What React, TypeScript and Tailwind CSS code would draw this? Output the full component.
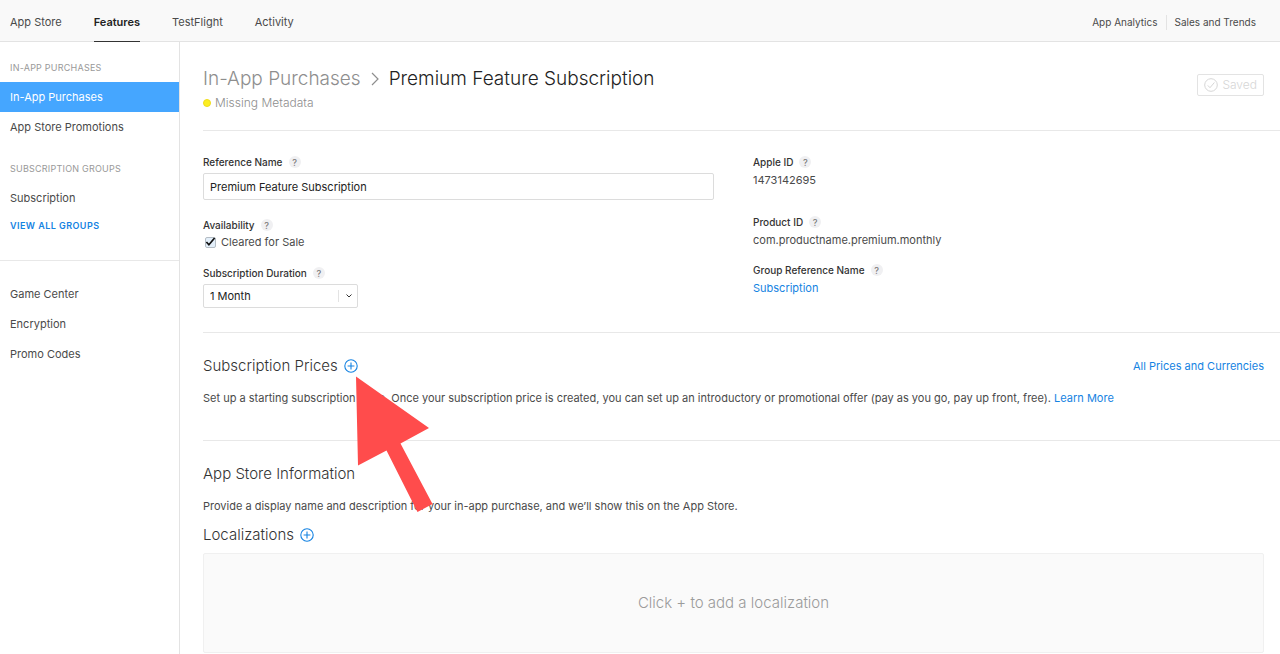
import type { ReactNode } from 'react';
import { clsx } from 'clsx';

const tabs = ['App Store', 'Features', 'TestFlight', 'Activity'];
const otherLinks = ['Game Center', 'Encryption', 'Promo Codes'];

function Help({ topic }: { topic: string }) {
    return (
        <button
            type="button"
            aria-label={`Help: ${topic}`}
            className="flex size-3 items-center justify-center rounded-full bg-[#f0f0f2] text-[9px] leading-none text-[#777]"
        >
            ?
        </button>
    );
}

function FieldLabel({ text, htmlFor }: { text: string; htmlFor?: string }) {
    return (
        <div className="flex h-4 items-center gap-1.5 text-[10px] font-medium text-[#333]">
            {htmlFor ? <label htmlFor={htmlFor}>{text}</label> : <span>{text}</span>}
            <Help topic={text} />
        </div>
    );
}

function AddButton({ label }: { label: string }) {
    return (
        <button type="button" aria-label={label} className="text-[#1583e2]">
            <svg viewBox="0 0 14 14" className="size-3.5" fill="none" stroke="currentColor">
                <circle cx="7" cy="7" r="6.2" strokeWidth="1.1" />
                <path d="M7 3.6v6.8M3.6 7h6.8" strokeWidth="1.1" />
            </svg>
        </button>
    );
}

function PointerArrow() {
    return (
        <svg
            viewBox="0 0 78 136"
            className="pointer-events-none absolute left-[153px] top-[22px] h-[136px] w-[78px]"
            aria-hidden="true"
        >
            <path
                d="M0 0.5 73 52 44.5 67.5 76.5 128 61.5 136 30.5 74.5 2 89.5Z"
                fill="#ff4c4c"
            />
        </svg>
    );
}

function Section({ children, className }: { children: ReactNode; className?: string }) {
    return (
        <section className={clsx('border-t border-[#e8e8e8] pr-4 pt-[21px]', className)}>
            {children}
        </section>
    );
}

function Header() {
    return (
        <header className="flex h-[42px] items-stretch justify-between border-b border-[#e3e3e3] bg-[#f9f9f9] pl-2.5 pr-6">
            <nav className="flex gap-8 text-[11px]">
                {tabs.map((tab) => (
                    <a
                        key={tab}
                        href="#"
                        className={clsx(
                            '-mb-px flex items-center pt-1',
                            tab === 'Features'
                                ? 'border-b border-[#333] font-semibold text-[#222]'
                                : 'border-b border-transparent',
                        )}
                    >
                        {tab}
                    </a>
                ))}
            </nav>
            <nav className="flex items-center pt-1 text-[10px]">
                <a href="#" className="pr-2">App Analytics</a>
                <a href="#" className="border-l border-[#e3e3e3] pl-2">Sales and Trends</a>
            </nav>
        </header>
    );
}

function Sidebar() {
    return (
        <aside className="w-[180px] shrink-0 border-r border-[#e3e3e3] pt-[18px] text-[11px]">
            <nav>
                <h2 className="px-2.5 pb-1.5 text-[9px] leading-4 tracking-wide text-[#999]">
                    IN-APP PURCHASES
                </h2>
                <a href="#" className="block bg-[#45a6ff] px-2.5 leading-[30px] text-white">
                    In-App Purchases
                </a>
                <a href="#" className="block px-2.5 leading-[30px]">
                    App Store Promotions
                </a>
                <h2 className="px-2.5 pb-1.5 pt-[19px] text-[9px] leading-4 tracking-wide text-[#999]">
                    SUBSCRIPTION GROUPS
                </h2>
                <a href="#" className="block px-2.5 leading-[30px]">
                    Subscription
                </a>
                <a
                    href="#"
                    className="block px-2.5 pb-[21px] text-[9px] font-semibold leading-[26px] tracking-wider text-[#1583e2]"
                >
                    VIEW ALL GROUPS
                </a>
            </nav>
            <nav className="border-t border-[#e8e8e8] pt-[18px]">
                {otherLinks.map((link) => (
                    <a key={link} href="#" className="block px-2.5 leading-[30px]">
                        {link}
                    </a>
                ))}
            </nav>
        </aside>
    );
}

function TitleBar() {
    return (
        <div className="flex items-start justify-between pb-[17px] pr-4 pt-[23px] font-light">
            <div>
                <h1 className="flex items-center gap-2.5 text-[19px] leading-7">
                    <a href="#" className="text-[#8e8e8e]">In-App Purchases</a>
                    <svg viewBox="0 0 8 14" className="h-3.5 w-2" fill="none" stroke="#8e8e8e" strokeWidth="1.2">
                        <path d="M1 1l6 6-6 6" />
                    </svg>
                    <span className="text-[#222]">Premium Feature Subscription</span>
                </h1>
                <p className="flex items-center gap-1 text-[12px] leading-5 text-[#8e8e8e]">
                    <span className="size-2 rounded-full border border-[#efdc1c] bg-[#fcee21]" />
                    Missing Metadata
                </p>
            </div>
            <button
                type="button"
                disabled
                className="mt-[9px] flex h-[22px] items-center gap-1 rounded-xs border border-[#e3e3e3] px-1.5 text-[12px] text-[#d6d6d6]"
            >
                <svg viewBox="0 0 14 14" className="size-3.5" fill="none" stroke="currentColor">
                    <circle cx="7" cy="7" r="6.3" />
                    <path d="M3.8 7.4l2.2 2.3 4.4-5.2" />
                </svg>
                Saved
            </button>
        </div>
    );
}

function Details() {
    return (
        <div className="grid grid-cols-2 gap-x-[39px] border-t border-[#e8e8e8] pb-6 pr-4 pt-[23px] text-[11px]">
            <div>
                <FieldLabel text="Reference Name" htmlFor="reference-name" />
                <input
                    id="reference-name"
                    type="text"
                    defaultValue="Premium Feature Subscription"
                    className="mt-[3px] block h-[27px] w-full rounded-xs border border-[#dcdcdc] px-1.5 text-[#222]"
                />
                <div className="mt-[17px]">
                    <FieldLabel text="Availability" />
                </div>
                <label className="mt-px flex h-4 items-center gap-1">
                    <span className="relative flex size-3.5 items-center justify-center">
                        <input
                            type="checkbox"
                            defaultChecked
                            className="peer size-[11px] appearance-none rounded-xs border border-[#b4bcc4] bg-[#e3effa]"
                        />
                        <svg
                            viewBox="0 0 14 14"
                            className="pointer-events-none absolute inset-0 hidden peer-checked:block"
                            fill="none"
                            stroke="#111"
                            strokeWidth="1.7"
                        >
                            <path d="M3.4 7l2.5 2.8L11.6 3" />
                        </svg>
                    </span>
                    Cleared for Sale
                </label>
                <div className="mt-[15px]">
                    <FieldLabel text="Subscription Duration" htmlFor="duration" />
                </div>
                <div className="relative mt-[3px] w-[155px]">
                    <select
                        id="duration"
                        className="block h-6 w-full appearance-none rounded-xs border border-[#dcdcdc] bg-white px-1.5 text-[#222]"
                    >
                        <option>1 Month</option>
                        <option>1 Year</option>
                    </select>
                    <span className="pointer-events-none absolute inset-y-1.5 right-0 flex w-5 items-center justify-center border-l border-[#e3e3e3]">
                        <svg viewBox="0 0 6 4" className="h-1 w-1.5" fill="none" stroke="#333">
                            <path d="M.5.5L3 3 5.5.5" />
                        </svg>
                    </span>
                </div>
            </div>
            <div>
                <FieldLabel text="Apple ID" />
                <p className="leading-5">1473142695</p>
                <div className="mt-6">
                    <FieldLabel text="Product ID" />
                    <p className="leading-5">com.productname.premium.monthly</p>
                </div>
                <div className="mt-3">
                    <FieldLabel text="Group Reference Name" />
                    <a href="#" className="block leading-5 text-[#1583e2]">Subscription</a>
                </div>
            </div>
        </div>
    );
}

export default function App() {
    return (
        <div className="flex min-h-screen flex-col bg-white font-['Inter',sans-serif] text-[#4a4a4a]">
            <Header />
            <div className="flex grow">
                <Sidebar />
                <main className="min-w-0 grow pl-[23px]">
                    <TitleBar />
                    <Details />
                    <Section className="pb-8">
                        <div className="flex items-center justify-between">
                            <div className="relative flex items-center gap-1.5">
                                <h2 className="text-[15px] font-light leading-6 text-[#333]">
                                    Subscription Prices
                                </h2>
                                <AddButton label="Add subscription price" />
                                <PointerArrow />
                            </div>
                            <a href="#" className="text-[11px] text-[#1583e2]">All Prices and Currencies</a>
                        </div>
                        <p className="mt-2.5 text-[11px] leading-5">
                            Set up a starting subscription price. Once your subscription price is created, you can
                            set up an introductory or promotional offer (pay as you go, pay up front, free).{' '}
                            <a href="#" className="text-[#1583e2]">Learn More</a>
                        </p>
                    </Section>
                    <Section>
                        <h2 className="text-[15px] font-light leading-6 text-[#333]">App Store Information</h2>
                        <p className="mt-2.5 text-[11px] leading-5">
                            Provide a display name and description for your in-app purchase, and we’ll show this on
                            the App Store.
                        </p>
                        <div className="mt-[7px] flex items-center gap-1.5">
                            <h3 className="text-[15px] font-light leading-6 text-[#333]">Localizations</h3>
                            <AddButton label="Add localization" />
                        </div>
                        <div className="mt-1.5 flex h-[100px] items-center justify-center rounded-xs border border-[#f0f0f0] bg-[#fafafa] text-[15px] font-light text-[#9b9b9b]">
                            Click + to add a localization
                        </div>
                    </Section>
                </main>
            </div>
        </div>
    );
}
